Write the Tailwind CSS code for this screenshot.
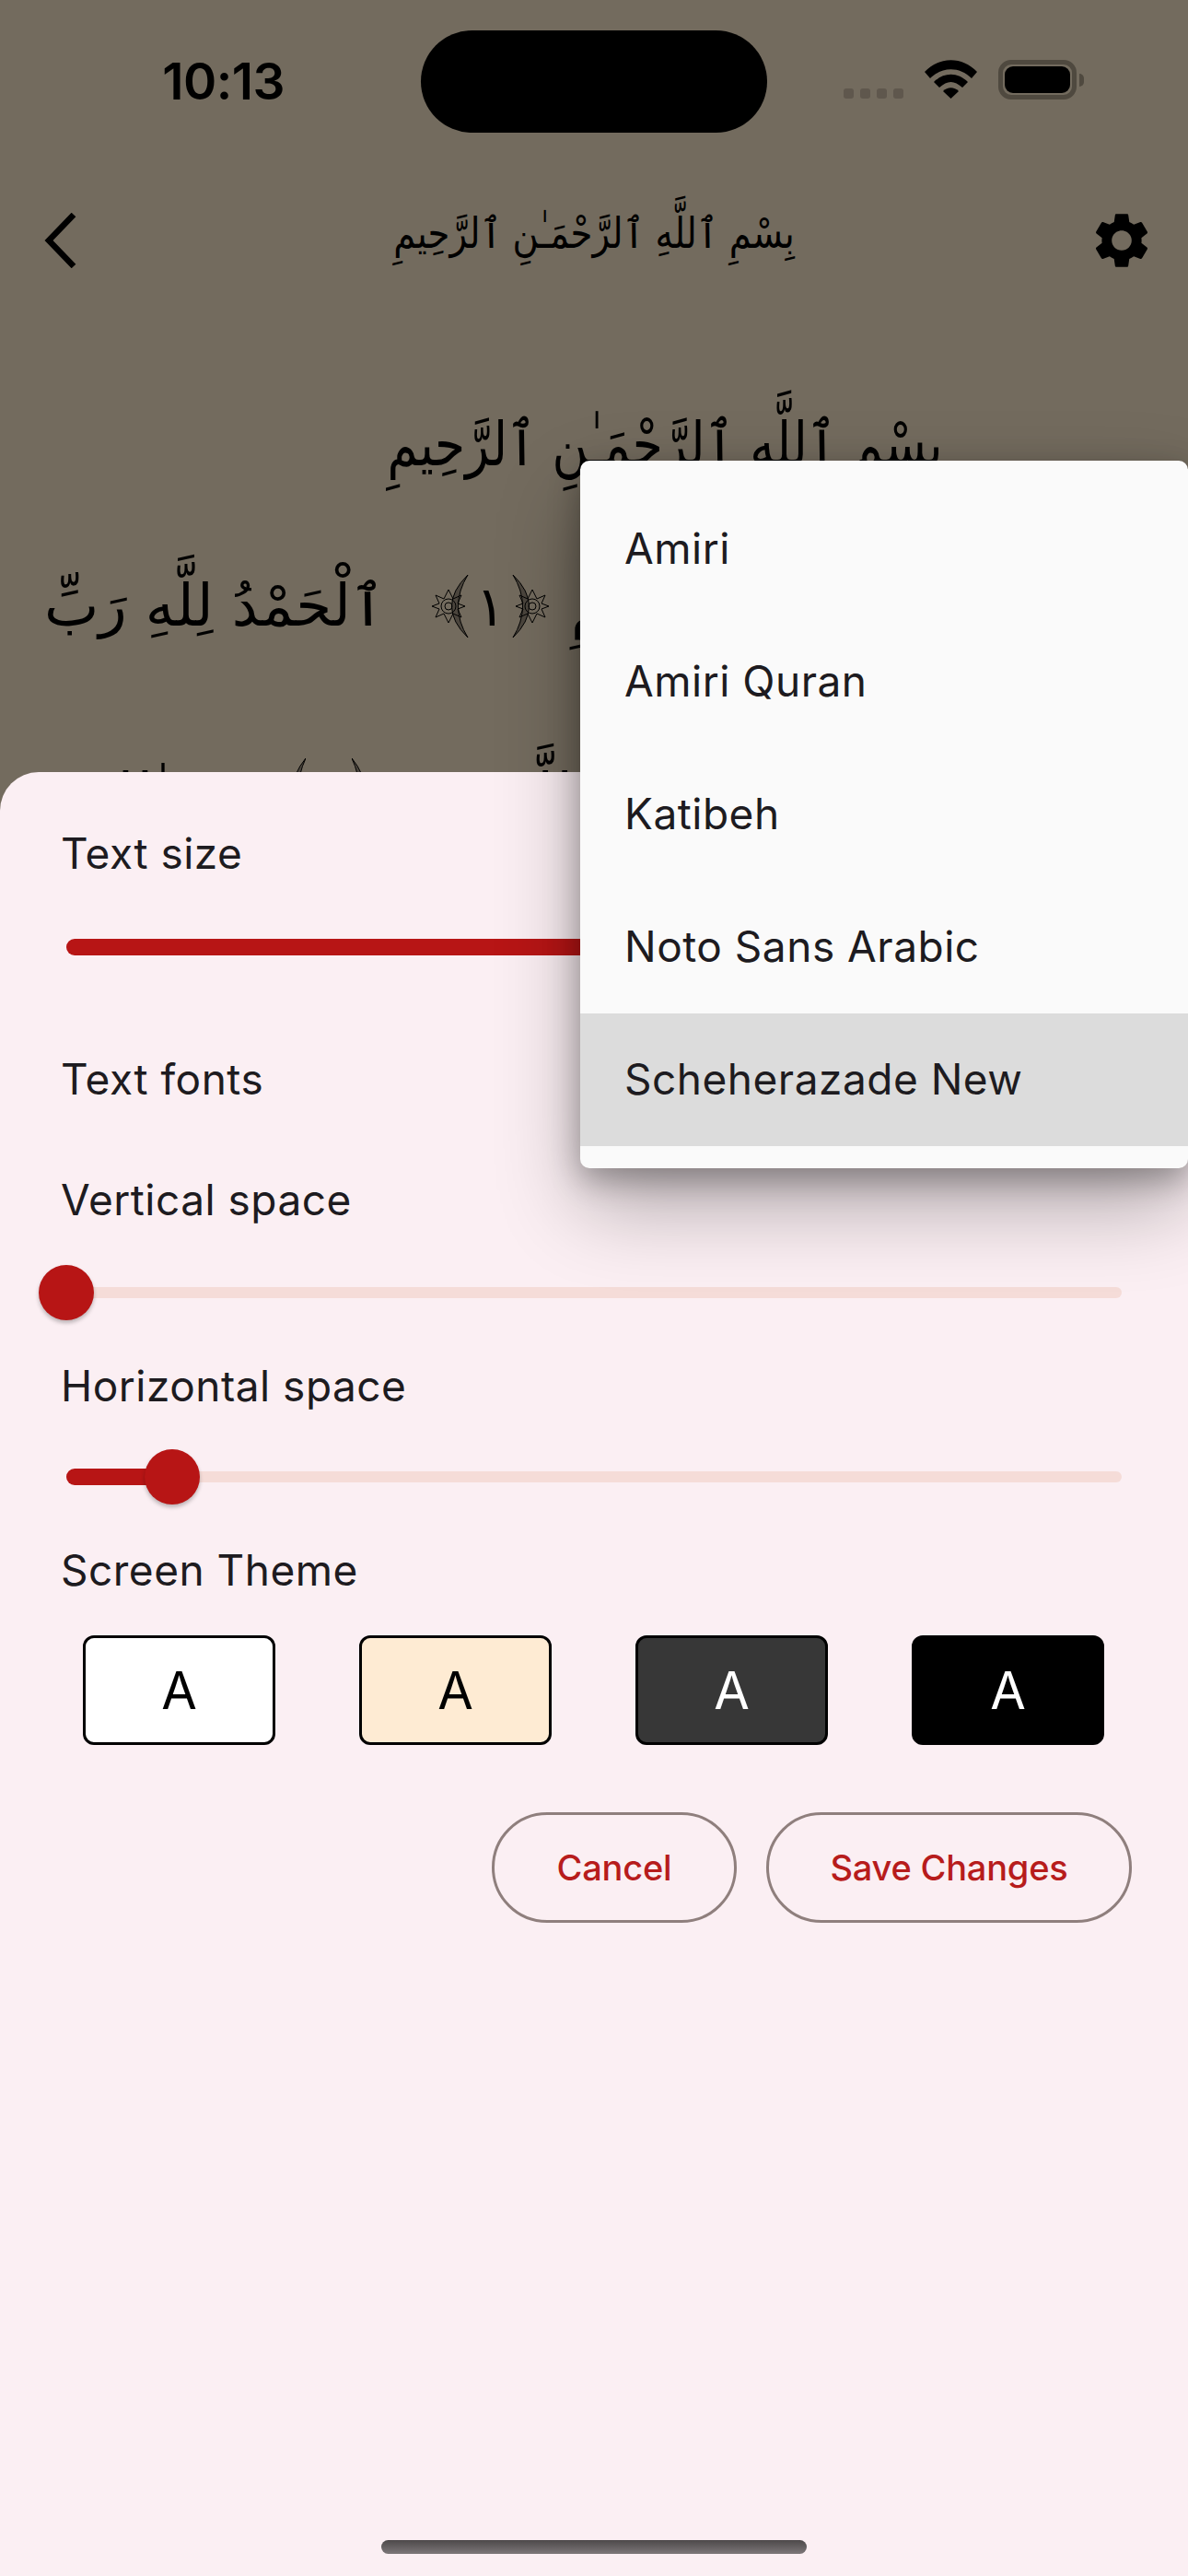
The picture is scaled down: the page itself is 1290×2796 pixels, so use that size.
<!DOCTYPE html>
<html lang="en">
<head>
    <meta charset="UTF-8">
    <meta name="viewport" content="width=device-width, initial-scale=1.0">
    <title>Reader settings</title>
    <script src="https://cdn.jsdelivr.net/npm/@tailwindcss/browser@4"></script>
</head>
<body class="bg-[#736b5e]">
    <div class="relative w-[1290px] h-[2796px] overflow-hidden bg-[#736b5e] font-['Inter',sans-serif] text-[#1d1b20]">

        <!-- status bar -->
        <div class="flex items-start h-[144px] pt-[33px]">
            <div class="w-[457px] h-[111px] flex items-center justify-end pr-[148px] text-[55px] leading-none font-semibold text-black tracking-[-0.5px]">10:13</div>
            <div class="w-[376px] h-[111px] rounded-full bg-black"></div>
            <div class="relative flex-1 h-[111px]">
                <div class="flex gap-[7px] ml-[83px] mt-[63px]">
                    <span class="w-[11px] h-[11px] rounded-[3px] bg-[#5f574d]"></span>
                    <span class="w-[11px] h-[11px] rounded-[3px] bg-[#5f574d]"></span>
                    <span class="w-[11px] h-[11px] rounded-[3px] bg-[#5f574d]"></span>
                    <span class="w-[11px] h-[11px] rounded-[3px] bg-[#5f574d]"></span>
                </div>
                <svg class="absolute left-[171px] top-[32px]" width="57" height="42" viewBox="0 0 57 42">
                    <path d="M0 13 C16 -4 41 -4 57 13 L51 20 C38 7 19 7 6 20 Z" fill="#000"/>
                    <path d="M10 24 C21 13 36 13 47 24 L41 30 C32 22 25 22 16 30 Z" fill="#000"/>
                    <path d="M20 34 C25 29 32 29 37 34 L28.5 42 Z" fill="#000"/>
                </svg>
                <div class="absolute left-[251px] top-[32px] w-[85px] h-[43px] rounded-[14px] border-[5px] border-[#4f493f] p-[2px]">
                    <div class="w-full h-full rounded-[9px] bg-black"></div>
                </div>
                <div class="absolute left-[339px] top-[47px] w-[5px] h-[14px] rounded-r-[5px] bg-[#4f493f]"></div>
            </div>
        </div>

        <!-- app bar -->
        <div class="flex items-center justify-between h-[120px] mt-[57px] pl-[48px] pr-[36px]">
            <svg width="36" height="60" viewBox="0 0 36 60" fill="none">
                <path d="M32 2 L5 30 L32 58" stroke="#000" stroke-width="6.5"/>
            </svg>
            <div dir="rtl" class="w-[436px] ml-[24px] mb-[16px] flex justify-center text-[46px] leading-[104px] text-black whitespace-nowrap scale-x-[0.84] font-['DejaVu_Sans',serif]">بِسْمِ ٱللَّهِ ٱلرَّحْمَـٰنِ ٱلرَّحِيمِ</div>
            <svg width="72" height="72" viewBox="0 0 24 24" fill="#000">
                <path d="M19.14 12.94c.04-.3.06-.61.06-.94 0-.32-.02-.64-.07-.94l2.03-1.58c.18-.14.23-.41.12-.61l-1.92-3.32c-.12-.22-.37-.29-.59-.22l-2.39.96c-.5-.38-1.03-.7-1.62-.94l-.36-2.54c-.04-.24-.24-.41-.48-.41h-3.84c-.24 0-.43.17-.47.41l-.36 2.54c-.59.24-1.13.57-1.62.94l-2.39-.96c-.22-.08-.47 0-.59.22L2.74 8.87c-.12.21-.08.47.12.61l2.03 1.58c-.05.3-.09.63-.09.94s.02.64.07.94l-2.03 1.58c-.18.14-.23.41-.12.61l1.92 3.32c.12.22.37.29.59.22l2.39-.96c.5.38 1.03.7 1.62.94l.36 2.54c.05.24.24.41.48.41h3.84c.24 0 .44-.17.47-.41l.36-2.54c.59-.24 1.13-.56 1.62-.94l2.39.96c.22.08.47 0 .59-.22l1.92-3.32c.12-.22.07-.47-.12-.61l-2.01-1.58zM12 15.6c-1.98 0-3.6-1.62-3.6-3.6s1.62-3.6 3.6-3.6 3.6 1.62 3.6 3.6-1.62 3.6-3.6 3.6z"/>
            </svg>
        </div>

        <!-- quran text behind the sheet -->
        <div class="text-black font-['DejaVu_Sans',serif]">
            <div class="mt-[102px] h-[120px] ml-[420px] w-[604px] flex justify-center text-[66px] leading-[120px] whitespace-nowrap scale-x-[0.81]"><span dir="rtl">بِسْمِ ٱللَّهِ ٱلرَّحْمَـٰنِ ٱلرَّحِيمِ</span></div>
            <div class="flex items-center h-[110px] mt-[60px] pl-[49px] text-[63px] leading-[110px] whitespace-nowrap">
                <span dir="rtl" class="w-[369px]">ٱلْحَمْدُ لِلَّهِ رَبِّ</span>
                <div class="flex items-center ml-[51px] w-[127px] h-[68px]">
                    <svg width="46" height="68" viewBox="0 0 46 68" fill="none" stroke="#000" stroke-width="1">
                        <path d="M39 0 Q4 34 39 68 Q18 34 39 0Z" fill="#000" fill-opacity=".35"/>
                        <circle cx="18" cy="34" r="4"/><circle cx="18" cy="34" r="8"/>
                        <path d="M18 16 L23 26 L32 22 L28 31 L36 34 L28 37 L32 46 L23 42 L18 52 L13 42 L4 46 L8 37 L0 34 L8 31 L4 22 L13 26Z"/>
                    </svg>
                    <span class="flex-1 text-center text-[60px] leading-[68px]">١</span>
                    <svg width="46" height="68" viewBox="0 0 46 68" fill="none" stroke="#000" stroke-width="1">
                        <path d="M7 0 Q42 34 7 68 Q28 34 7 0Z" fill="#000" fill-opacity=".35"/>
                        <circle cx="28" cy="34" r="4"/><circle cx="28" cy="34" r="8"/>
                        <path d="M28 16 L33 26 L42 22 L38 31 L46 34 L38 37 L42 46 L33 42 L28 52 L23 42 L14 46 L18 37 L10 34 L18 31 L14 22 L23 26Z"/>
                    </svg>
                </div>
                <span dir="rtl" class="ml-[24px]">ٱلرَّحِيمِ</span>
            </div>
            <div class="flex items-start h-[110px] mt-[95px] pl-[125px] text-[63px] leading-[110px] whitespace-nowrap">
                <span dir="rtl" class="w-[95px]">مَـٰلِكِ</span>
                <div class="flex items-start w-[90px] ml-[92px] mt-[15px]">
                    <svg width="20" height="68" viewBox="0 0 20 68" fill="none" stroke="#000" stroke-width="1"><path d="M20 0 Q-8 34 20 68 Q4 34 20 0Z" fill="#000" fill-opacity=".35"/></svg>
                    <span class="flex-1 text-center text-[60px] leading-[68px]">٣</span>
                    <svg width="20" height="68" viewBox="0 0 20 68" fill="none" stroke="#000" stroke-width="1"><path d="M0 0 Q28 34 0 68 Q16 34 0 0Z" fill="#000" fill-opacity=".35"/></svg>
                </div>
                <span dir="rtl" class="ml-[146px]">ٱللَّهِ</span>
            </div>
        </div>

        <!-- settings sheet -->
        <div class="absolute inset-x-0 top-[838px] bottom-0 rounded-t-[42px] bg-[#fbeff3] text-[46px] tracking-[0.5px]">
            <div class="h-[72px] mt-[52px] pl-[66px] leading-[72px]">Text size</div>
            <div class="relative h-[60px] mt-[36px] mx-[72px]">
                <div class="absolute inset-x-0 top-[24px] h-[12px] rounded-full bg-[#f5dcd8]"></div>
                <div class="absolute left-0 top-[21px] w-[800px] h-[18px] rounded-full bg-[#b71515]"></div>
            </div>
            <div class="h-[72px] mt-[77px] pl-[66px] leading-[72px]">Text fonts</div>
            <div class="h-[72px] mt-[59px] pl-[66px] leading-[72px]">Vertical space</div>
            <div class="relative h-[60px] mt-[35px] mx-[72px]">
                <div class="absolute inset-x-0 top-[24px] h-[12px] rounded-full bg-[#f5dcd8]"></div>
                <div class="absolute left-[-30px] top-0 w-[60px] h-[60px] rounded-full bg-[#b71515] shadow-[0_3px_4px_rgba(0,0,0,0.25)]"></div>
            </div>
            <div class="h-[72px] mt-[35px] pl-[66px] leading-[72px]">Horizontal space</div>
            <div class="relative h-[60px] mt-[33px] mx-[72px]">
                <div class="absolute inset-x-0 top-[24px] h-[12px] rounded-full bg-[#f5dcd8]"></div>
                <div class="absolute left-0 top-[21px] w-[115px] h-[18px] rounded-full bg-[#b71515]"></div>
                <div class="absolute left-[85px] top-0 w-[60px] h-[60px] rounded-full bg-[#b71515] shadow-[0_3px_4px_rgba(0,0,0,0.25)]"></div>
            </div>
            <div class="h-[72px] mt-[35px] pl-[66px] leading-[72px]">Screen Theme</div>

            <div class="flex gap-[91px] mt-[35px] pl-[90px] text-[56px] tracking-normal">
                <div class="flex items-center justify-center w-[209px] h-[119px] rounded-[12px] border-[3px] border-black bg-white text-black">A</div>
                <div class="flex items-center justify-center w-[209px] h-[119px] rounded-[12px] border-[3px] border-black bg-[#feebd3] text-black">A</div>
                <div class="flex items-center justify-center w-[209px] h-[119px] rounded-[12px] border-[3px] border-black bg-[#373737] text-white">A</div>
                <div class="flex items-center justify-center w-[209px] h-[119px] rounded-[12px] border-[3px] border-black bg-black text-white">A</div>
            </div>

            <div class="flex justify-end gap-[32px] mt-[73px] pr-[61px] text-[38px] font-medium tracking-[-0.2px] text-[#b71c1c]">
                <div class="flex items-center justify-center w-[266px] h-[120px] rounded-full border-[3px] border-[#8f7f7d]">Cancel</div>
                <div class="flex items-center justify-center w-[397px] h-[120px] rounded-full border-[3px] border-[#8f7f7d]">Save Changes</div>
            </div>
        </div>

        <!-- font dropdown -->
        <div class="absolute left-[630px] right-0 top-[500px] py-[24px] rounded-[10px] bg-[#fafafa] text-[46px] tracking-[0.5px] shadow-[0_40px_90px_rgba(0,0,0,0.3),0_12px_34px_rgba(0,0,0,0.3)]">
            <div class="flex items-center h-[144px] pl-[48px] pb-[2px]">Amiri</div>
            <div class="flex items-center h-[144px] pl-[48px] pb-[2px]">Amiri Quran</div>
            <div class="flex items-center h-[144px] pl-[48px] pb-[2px]">Katibeh</div>
            <div class="flex items-center h-[144px] pl-[48px] pb-[2px]">Noto Sans Arabic</div>
            <div class="flex items-center h-[144px] pl-[48px] pb-[2px] bg-[#dcdcdc]">Scheherazade New</div>
        </div>

        <!-- home indicator -->
        <div class="absolute left-[414px] top-[2757px] w-[462px] h-[15px] rounded-[8px] bg-linear-to-b from-[#4d494a] to-[#7d7779]"></div>
    </div>
</body>
</html>
